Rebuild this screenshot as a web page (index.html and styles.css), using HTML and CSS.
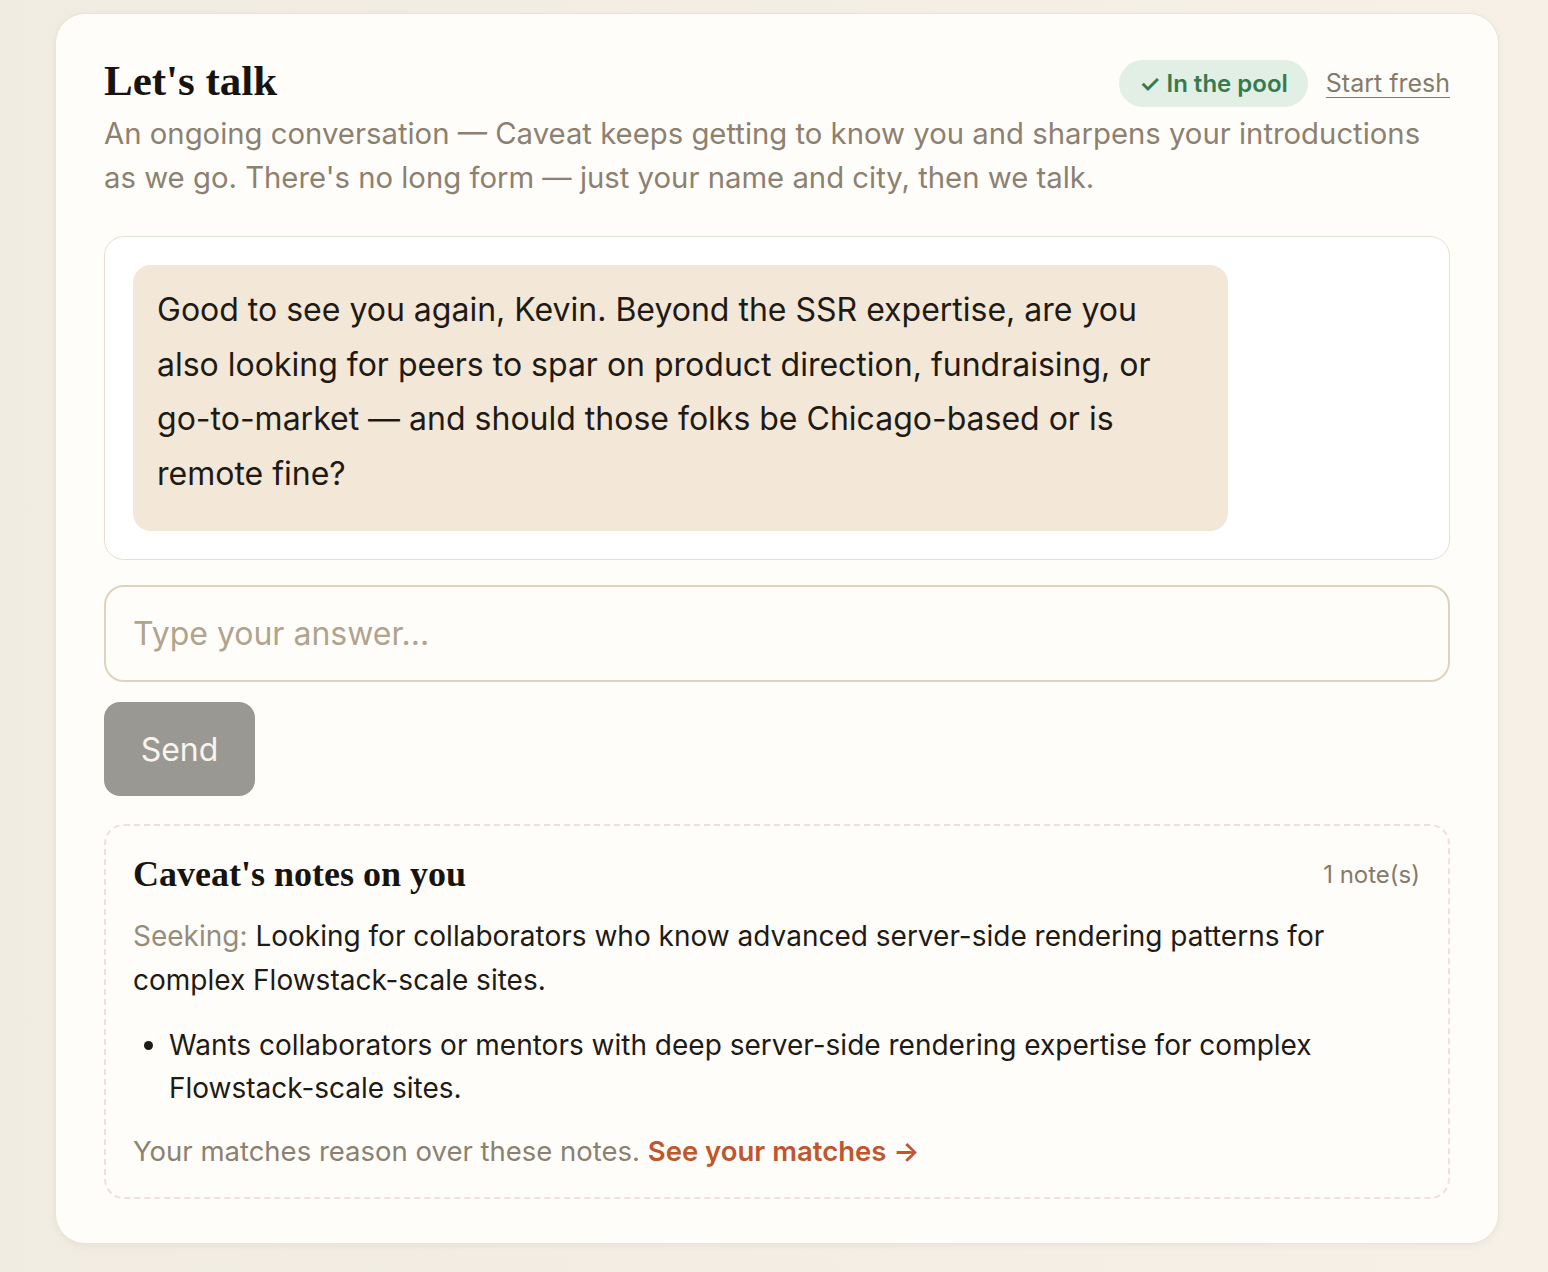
FILE: index.html
```html
<!DOCTYPE html>
<html>
<head>
    <title>Let's talk</title>
    <meta name="viewport" content="width=device-width, initial-scale=1"/>
    <link rel="stylesheet" href="styles.css">
</head>
<body>
<div class="page">
    <div class="card">
        <div class="head">
            <h1>Let's talk</h1>
            <div class="status">
                <span class="pill">&#10003; In the pool</span>
                <a href="#" class="fresh">Start fresh</a>
            </div>
        </div>
        <p class="lead">An ongoing conversation — Caveat keeps getting to know you and sharpens your introductions as we go. There's no long form — just your name and city, then we talk.</p>

        <div class="chat">
            <div class="bubble">Good to see you again, Kevin. Beyond the SSR expertise, are you also looking for peers to spar on product direction, fundraising, or go-to-market — and should those folks be Chicago-based or is remote fine?</div>
        </div>

        <input type="text" class="answer" placeholder="Type your answer...">
        <div>
            <button type="submit" class="send" disabled>Send</button>
        </div>

        <div class="notes">
            <div class="notes-head">
                <h2>Caveat's notes on you</h2>
                <span class="count">1 note(s)</span>
            </div>
            <p class="seeking"><span class="label">Seeking:</span> Looking for collaborators who know advanced server-side rendering patterns for complex Flowstack-scale sites.</p>
            <ul>
                <li>Wants collaborators or mentors with deep server-side rendering expertise for complex Flowstack-scale sites.</li>
            </ul>
            <p class="foot">Your matches reason over these notes. <a href="#">See your matches &rarr;</a></p>
        </div>
    </div>
</div>
</body>
</html>
```

FILE: styles.css
```css
body {
    margin: 0;
    font-family: Inter, "Noto Sans", Arial, sans-serif;
    background: linear-gradient(to right, #f1ece2, #f6f0e7);
    color: #1e1a15;
}

.page {
    padding: 13px 49px 29px 55px;
}

.card {
    background: #fffdfa;
    border: 1px solid #ebe3d6;
    border-radius: 30px;
    box-shadow: 0 2px 6px rgba(120, 100, 70, 0.08);
    padding: 41px 48px 44px 48px;
}

.head {
    display: flex;
    justify-content: space-between;
    align-items: center;
}

h1 {
    font-family: "Liberation Serif", "DejaVu Serif", serif;
    font-size: 43px;
    font-weight: bold;
    margin: 0;
    line-height: 52px;
    color: #17140f;
}

.status {
    display: flex;
    align-items: center;
    gap: 18px;
    margin-top: 4px;
}

.pill {
    background: #e2efe4;
    color: #367a4f;
    font-weight: 600;
    font-size: 24px;
    padding: 9px 20px 9px 20px;
    border-radius: 24px;
    line-height: 29px;
}

.fresh {
    color: #857b6b;
    font-size: 25px;
    text-decoration: underline;
    text-underline-offset: 5px;
    text-decoration-thickness: 1px;
}

.lead {
    margin: 5px 0 0 0;
    color: #8c8170;
    font-size: 29.3px;
    line-height: 44px;
}

.chat {
    margin-top: 36px;
    border: 1px solid #e7dfd0;
    border-radius: 20px;
    padding: 28px;
    background: #ffffff;
}

.bubble {
    box-sizing: border-box;
    max-width: 85%;
    background: #f3e7d8;
    border-radius: 18px;
    padding: 18px 24px 30px 24px;
    font-size: 32px;
    line-height: 54.6px;
    color: #1e1a15;
}

.answer {
    display: block;
    box-sizing: border-box;
    width: 100%;
    height: 97px;
    margin-top: 25px;
    border: 2px solid #dfd3bd;
    border-radius: 20px;
    background: #fffdfa;
    padding: 0 27px;
    font-family: Inter, "Noto Sans", Arial, sans-serif;
    font-size: 32px;
    color: #1e1a15;
    outline: none;
}

.answer::placeholder {
    color: #b0a48e;
}

.send {
    margin-top: 20px;
    width: 151px;
    height: 94px;
    border: none;
    border-radius: 16px;
    background: #9a9893;
    color: #f8f4ee;
    font-family: Inter, "Noto Sans", Arial, sans-serif;
    font-size: 32px;
}

.notes {
    margin-top: 28px;
    border: 2px dashed #efdfdf;
    border-radius: 20px;
    padding: 26px 28px 24px 27px;
}

.notes-head {
    display: flex;
    justify-content: space-between;
    align-items: center;
}

h2 {
    font-family: "Liberation Serif", "DejaVu Serif", serif;
    font-size: 36px;
    font-weight: bold;
    margin: 0;
    line-height: 44px;
    color: #17140f;
}

.count {
    color: #857b6b;
    font-size: 24px;
}

.seeking {
    margin: 18px 0 0 0;
    font-size: 28px;
    line-height: 44px;
}

.label {
    color: #968c7c;
}

ul {
    margin: 22px 0 0 0;
    padding-left: 36px;
    font-size: 28px;
    line-height: 43px;
}

.foot {
    margin: 19px 0 0 0;
    color: #8c8170;
    font-size: 27.5px;
    line-height: 44px;
}

.foot a {
    color: #c0562e;
    font-weight: 600;
    text-decoration: none;
}
```
